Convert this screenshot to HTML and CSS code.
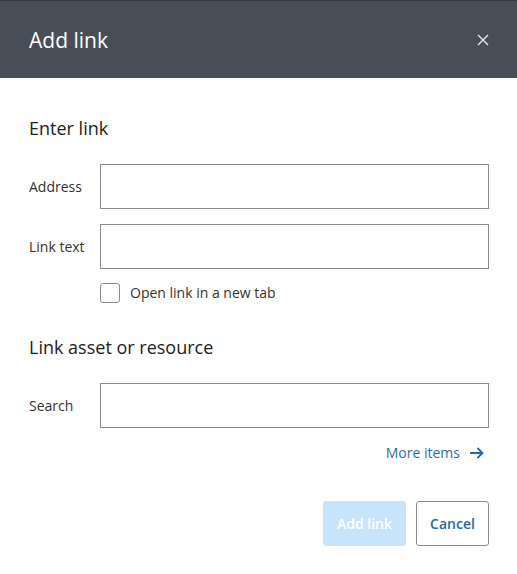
FILE: index.html
```html
<!DOCTYPE html>
<html>
<head>
<meta charset="utf-8">
<link rel="stylesheet" href="styles.css">
</head>
<body>
<div class="dialog">
  <div class="header">
    <h1 class="title">Add link</h1>
    <button class="close" aria-label="Close">
      <svg width="12" height="12" viewBox="0 0 12 12"><path d="M1 1L11 11M11 1L1 11" stroke="#e6e8ea" stroke-width="1.4" fill="none"/></svg>
    </button>
  </div>
  <div class="content">
    <h2 class="section-title first">Enter link</h2>
    <div class="row">
      <label class="label">Address</label>
      <input class="field" type="text">
    </div>
    <div class="row">
      <label class="label">Link text</label>
      <input class="field" type="text">
    </div>
    <div class="check-row">
      <span class="checkbox"></span>
      <span class="check-label">Open link in a new tab</span>
    </div>
    <h2 class="section-title second">Link asset or resource</h2>
    <div class="row">
      <label class="label">Search</label>
      <input class="field" type="text">
    </div>
    <div class="more-row">
      <a class="more">More items
        <svg width="15" height="12" viewBox="0 0 15 12"><path d="M1 6H13.5M8.5 1L13.5 6L8.5 11" stroke="#1f6aa5" stroke-width="1.8" fill="none"/></svg>
      </a>
    </div>
    <div class="actions">
      <button class="btn primary">Add link</button>
      <button class="btn secondary">Cancel</button>
    </div>
  </div>
</div>
</body>
</html>
```
FILE: styles.css
```css
html, body {
  margin: 0;
  padding: 0;
  background: #fff;
  font-family: "Open Sans", "Liberation Sans", sans-serif;
}
.dialog {
  width: 517px;
  height: 574px;
  background: #fff;
}
.header {
  height: 77px;
  border-top: 1px solid #383c42;
  background: #474e57;
  display: flex;
  align-items: center;
  justify-content: space-between;
  padding: 0 28px 0 29px;
}
.title {
  margin: 0;
  color: #fff;
  font-size: 21px;
  font-weight: 400;
  line-height: 26px;
  padding-top: 1px;
}
.close {
  background: none;
  border: 0;
  padding: 0;
  width: 12px;
  height: 12px;
  display: flex;
  cursor: pointer;
}
.content {
  padding: 0 28px 0 29px;
}
.section-title {
  margin: 0;
  font-size: 18px;
  font-weight: 400;
  color: #222;
  line-height: 24px;
}
.section-title.first { padding-top: 38px; margin-bottom: 24px; }
.section-title.second { margin-top: 32px; margin-bottom: 24px; }
.row {
  display: flex;
  align-items: center;
  margin-bottom: 15px;
}
.label {
  width: 71px;
  font-size: 14px;
  color: #333;
  line-height: 20px;
}
.field {
  box-sizing: border-box;
  width: 389px;
  height: 45px;
  border: 1px solid #8c8c8c;
  border-radius: 0;
  margin: 0;
  padding: 0 10px;
  font: inherit;
}
.check-row {
  display: flex;
  align-items: center;
  margin-left: 71px;
  margin-top: -1px;
  gap: 10px;
}
.checkbox {
  box-sizing: border-box;
  width: 20px;
  height: 20px;
  border: 1px solid #8c8c8c;
  border-radius: 3px;
  background: #fff;
}
.check-label {
  font-size: 14px;
  color: #333;
  line-height: 20px;
}
.more-row {
  display: flex;
  justify-content: flex-end;
  margin-top: 3px;
  padding-right: 5px;
}
.more {
  display: flex;
  align-items: center;
  gap: 9px;
  color: #2d6fa3;
  font-size: 14px;
  line-height: 20px;
}
.actions {
  display: flex;
  justify-content: flex-end;
  gap: 10px;
  margin-top: 38px;
}
.btn {
  box-sizing: border-box;
  height: 45px;
  border-radius: 3px;
  font-family: inherit;
  font-size: 14px;
  font-weight: 600;
  padding: 0;
}
.primary {
  width: 83px;
  background: #c8e4fb;
  border: 0;
  color: #fff;
}
.secondary {
  width: 73px;
  background: #fff;
  border: 1px solid #8c8c8c;
  color: #1f6aa5;
}
```
